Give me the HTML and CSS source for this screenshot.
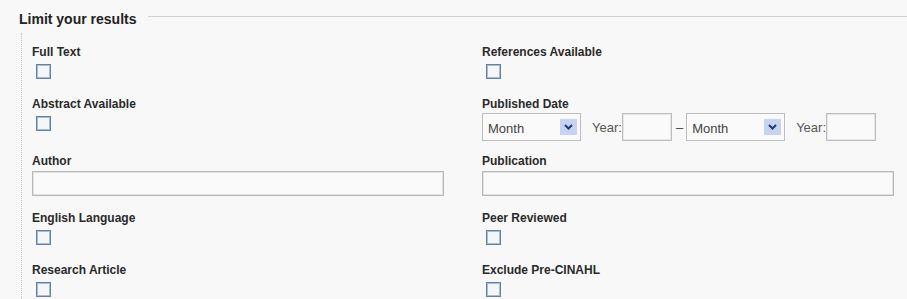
FILE: index.html
```html
<!DOCTYPE html>
<html lang="en">
<head>
  <meta charset="UTF-8">
  <title>Limit your results</title>
  <link rel="stylesheet" href="styles.css">
</head>
<body>
  <div class="limits">
    <div class="legend">
      <h2>Limit your results</h2>
      <div class="legend-line"></div>
    </div>
    <div class="box">
      <div class="field check">
        <label>Full Text</label>
        <span class="cb"></span>
      </div>
      <div class="field check">
        <label>References Available</label>
        <span class="cb"></span>
      </div>
      <div class="field check">
        <label>Abstract Available</label>
        <span class="cb"></span>
      </div>
      <div class="field date">
        <label>Published Date</label>
        <div class="date-row">
          <div class="select"><span>Month</span><span class="arrow"><svg width="9" height="6" viewBox="0 0 9 6"><path d="M1 1 L4.5 4.5 L8 1" fill="none" stroke="#1f3b73" stroke-width="2"/></svg></span></div>
          <span class="year">Year:</span>
          <span class="year-box"></span>
          <span class="dash">–</span>
          <div class="select"><span>Month</span><span class="arrow"><svg width="9" height="6" viewBox="0 0 9 6"><path d="M1 1 L4.5 4.5 L8 1" fill="none" stroke="#1f3b73" stroke-width="2"/></svg></span></div>
          <span class="year">Year:</span>
          <span class="year-box"></span>
        </div>
      </div>
      <div class="field text">
        <label>Author</label>
        <span class="input"></span>
      </div>
      <div class="field text">
        <label>Publication</label>
        <span class="input"></span>
      </div>
      <div class="field check">
        <label>English Language</label>
        <span class="cb"></span>
      </div>
      <div class="field check">
        <label>Peer Reviewed</label>
        <span class="cb"></span>
      </div>
      <div class="field check">
        <label>Research Article</label>
        <span class="cb"></span>
      </div>
      <div class="field check">
        <label>Exclude Pre-CINAHL</label>
        <span class="cb"></span>
      </div>
    </div>
  </div>
</body>
</html>
```

FILE: styles.css
```css
body {
  margin: 0;
  background-color: #f8f8f8;
  font-family: "Liberation Sans", Arial, sans-serif;
  color: #2a2a2a;
  overflow: hidden;
}
.limits {
  display: flex;
  flex-direction: column;
  box-sizing: border-box;
  height: 100vh;
  padding-top: 10px;
}
.legend {
  display: flex;
  align-items: flex-start;
  padding-left: 19px;
}
.legend h2 {
  margin: 0;
  font-size: 14px;
  line-height: 18px;
  font-weight: bold;
  color: #222;
}
.legend-line {
  flex: 1;
  margin-left: 12px;
  margin-top: 6px;
  border-top: 1px solid #d0d0d0;
}
.box {
  flex: 1;
  overflow: hidden;
  margin-left: 21px;
  margin-top: 5px;
  padding-top: 12px;
  padding-left: 10px;
  border-left: 1px dotted #c4c4c4;
  display: grid;
  grid-template-columns: 450px 1fr;
  align-items: start;
  align-content: start;
}
.field label {
  display: block;
  font-size: 12px;
  line-height: 14px;
  font-weight: bold;
  color: #2a2a2a;
}
.check {
  margin-bottom: 18px;
}
.cb {
  display: block;
  width: 13px;
  height: 13px;
  margin-top: 5px;
  margin-left: 4px;
  border: 1px solid #5f82aa;
  box-shadow: inset 0 0 0 1px #a9bcd2;
  background-color: #f4f6f8;
}
.text {
  margin-bottom: 15px;
}
.input {
  display: block;
  width: 410px;
  height: 23px;
  margin-top: 3px;
  border: 1px solid #b8b8b8;
  box-shadow: inset 0 0 0 1px #e2e2e2;
  background-color: #fafafa;
}
.date {
  margin-bottom: 13px;
}
.date-row {
  display: flex;
  align-items: center;
  margin-top: 2px;
  height: 28px;
}
.select {
  display: flex;
  align-items: center;
  justify-content: space-between;
  box-sizing: border-box;
  width: 99px;
  height: 28px;
  padding: 0 3px 0 5px;
  border: 1px solid #bdbdbd;
  background-color: #fafafa;
  font-size: 13px;
  color: #444;
}
.select span:first-child {
  padding-top: 2px;
}
.arrow {
  display: flex;
  align-items: center;
  justify-content: center;
  width: 17px;
  height: 16px;
  background-color: #c6d4f2;
}
.year {
  margin-left: 11px;
  font-size: 13px;
  color: #555;
}
.year-box {
  box-sizing: border-box;
  width: 50px;
  height: 28px;
  border: 1px solid #bdbdbd;
  box-shadow: inset 0 0 0 1px #e6e6e6;
  background-color: #fafafa;
}
.dash {
  margin: 0 3px 0 4px;
  font-size: 13px;
  color: #444;
}
```
